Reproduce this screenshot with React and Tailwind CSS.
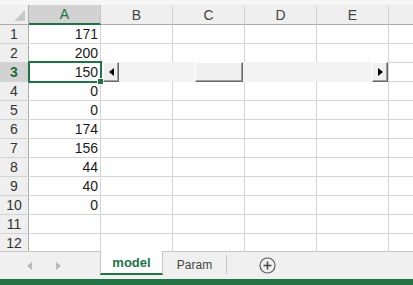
export default function App() {
  const cols = ['A', 'B', 'C', 'D', 'E'];
  const data = [171, 200, 150, 0, 0, 174, 156, 44, 40, 0, null, null];
  const btn =
    "flex items-center justify-center bg-[#f0f0f0] border-t border-l border-white border-b border-r border-b-[#696969] border-r-[#696969] shadow-[inset_-1px_-1px_0_#a0a0a0]";
  return (
    <div className="relative w-[413px] h-[285px] overflow-hidden bg-white font-['Liberation_Sans',Arial,sans-serif] text-[14px] text-[#1a1a1a]">
      {/* grid area */}
      <div className="h-[251px] overflow-hidden">
        <div className="h-[5px] bg-[#f6f6f6]" />
        {/* column headers */}
        <div className="flex h-[20px] bg-[#efefef]">
          <div className="relative w-[29px] h-full border-r border-b border-r-[#ababab] border-b-[#ababab]">
            <svg className="absolute right-[3px] bottom-[3px]" width="11" height="11" viewBox="0 0 11 11">
              <polygon points="11,0 11,11 0,11" fill="#c9c9c9" />
            </svg>
          </div>
          {cols.map((c) =>
            c === 'A' ? (
              <div
                key={c}
                className="w-[72px] h-full flex items-center justify-center bg-[#d2d2d2] text-[#217346] border-r border-r-[#c6c6c6] border-b-2 border-b-[#217346] leading-none"
              >
                {c}
              </div>
            ) : (
              <div
                key={c}
                className="w-[72px] h-full flex items-center justify-center text-[#444] border-r border-r-[#d4d4d4] border-b border-b-[#ababab] leading-none"
              >
                {c}
              </div>
            )
          )}
          <div className="flex-1 h-full border-b border-b-[#ababab]" />
        </div>
        {/* rows */}
        {data.map((v, i) => {
          const sel = i === 2;
          return (
            <div key={i} className="flex h-[19px] border-b border-[#d4d4d4]">
              <div
                className={
                  sel
                    ? "w-[29px] h-full flex items-center justify-center bg-[#d2d2d2] text-[#1e6b3c] font-bold border-r border-r-[#ababab] leading-none"
                    : "w-[29px] h-full flex items-center justify-center bg-[#efefef] text-[#333] border-r border-r-[#ababab] leading-none"
                }
              >
                {i + 1}
              </div>
              <div className="w-[72px] h-full flex items-center justify-end pr-[2px] border-r border-[#d4d4d4] leading-none">
                {v === null ? '' : v}
              </div>
              {[0, 1, 2, 3].map((k) => (
                <div key={k} className="w-[72px] h-full border-r border-[#d4d4d4]" />
              ))}
              <div className="flex-1" />
            </div>
          );
        })}
      </div>

      {/* sheet tab bar */}
      <div className="flex h-[28px] bg-[#f0f0f0] border-t border-[#c6c6c6]">
        <div className="w-[100px] flex items-center">
          <svg className="ml-[27px]" width="5" height="8" viewBox="0 0 5 8">
            <polygon points="5,0 5,8 0,4" fill="#b8b8b8" />
          </svg>
          <svg className="ml-[24px]" width="5" height="8" viewBox="0 0 5 8">
            <polygon points="0,0 0,8 5,4" fill="#b8b8b8" />
          </svg>
        </div>
        <div className="-mt-px w-[63px] h-[24px] bg-white border-l border-r border-[#c6c6c6] border-b-2 border-b-[#217346] flex items-center justify-center pt-[1px] text-[13px] font-bold text-[#217346]">
          model
        </div>
        <div className="w-[63px] flex items-center justify-center text-[12px] text-[#444] pb-[1px]">
          Param
        </div>
        <div className="w-px h-[19px] self-center bg-[#c6c6c6] -mt-[2px]" />
        <div className="ml-[32px] flex items-center -mt-[1px]">
          <svg width="17" height="17" viewBox="0 0 17 17">
            <circle cx="8.5" cy="8.5" r="7.5" fill="none" stroke="#5a5a5a" strokeWidth="1.2" />
            <line x1="8.5" y1="4.5" x2="8.5" y2="12.5" stroke="#4a4a4a" strokeWidth="1.6" />
            <line x1="4.5" y1="8.5" x2="12.5" y2="8.5" stroke="#4a4a4a" strokeWidth="1.6" />
          </svg>
        </div>
      </div>

      {/* status bar */}
      <div className="h-[22px] bg-[#217346]" />

      {/* selected cell outline */}
      <div className="absolute left-[28px] top-[61px] w-[74px] h-[22px] border-2 border-[#217346]" />
      <div className="absolute left-[97px] top-[78px] w-[7px] h-[7px] bg-[#217346] border border-white" />

      {/* form scroll bar control */}
      <div className="absolute left-[103px] top-[62px] w-[285px] h-[20px] flex bg-[repeating-conic-gradient(#ececec_0%_25%,#fafafa_0%_50%)] bg-[length:2px_2px]">
        <div className={"w-[16px] h-full " + btn}>
          <svg width="5" height="8" viewBox="0 0 5 8">
            <polygon points="5,0 5,8 0,4" fill="#000" />
          </svg>
        </div>
        <div className="w-[76px]" />
        <div className={"w-[48px] h-full " + btn} />
        <div className="flex-1" />
        <div className={"w-[16px] h-full " + btn}>
          <svg width="5" height="8" viewBox="0 0 5 8">
            <polygon points="0,0 0,8 5,4" fill="#000" />
          </svg>
        </div>
      </div>
    </div>
  );
}
